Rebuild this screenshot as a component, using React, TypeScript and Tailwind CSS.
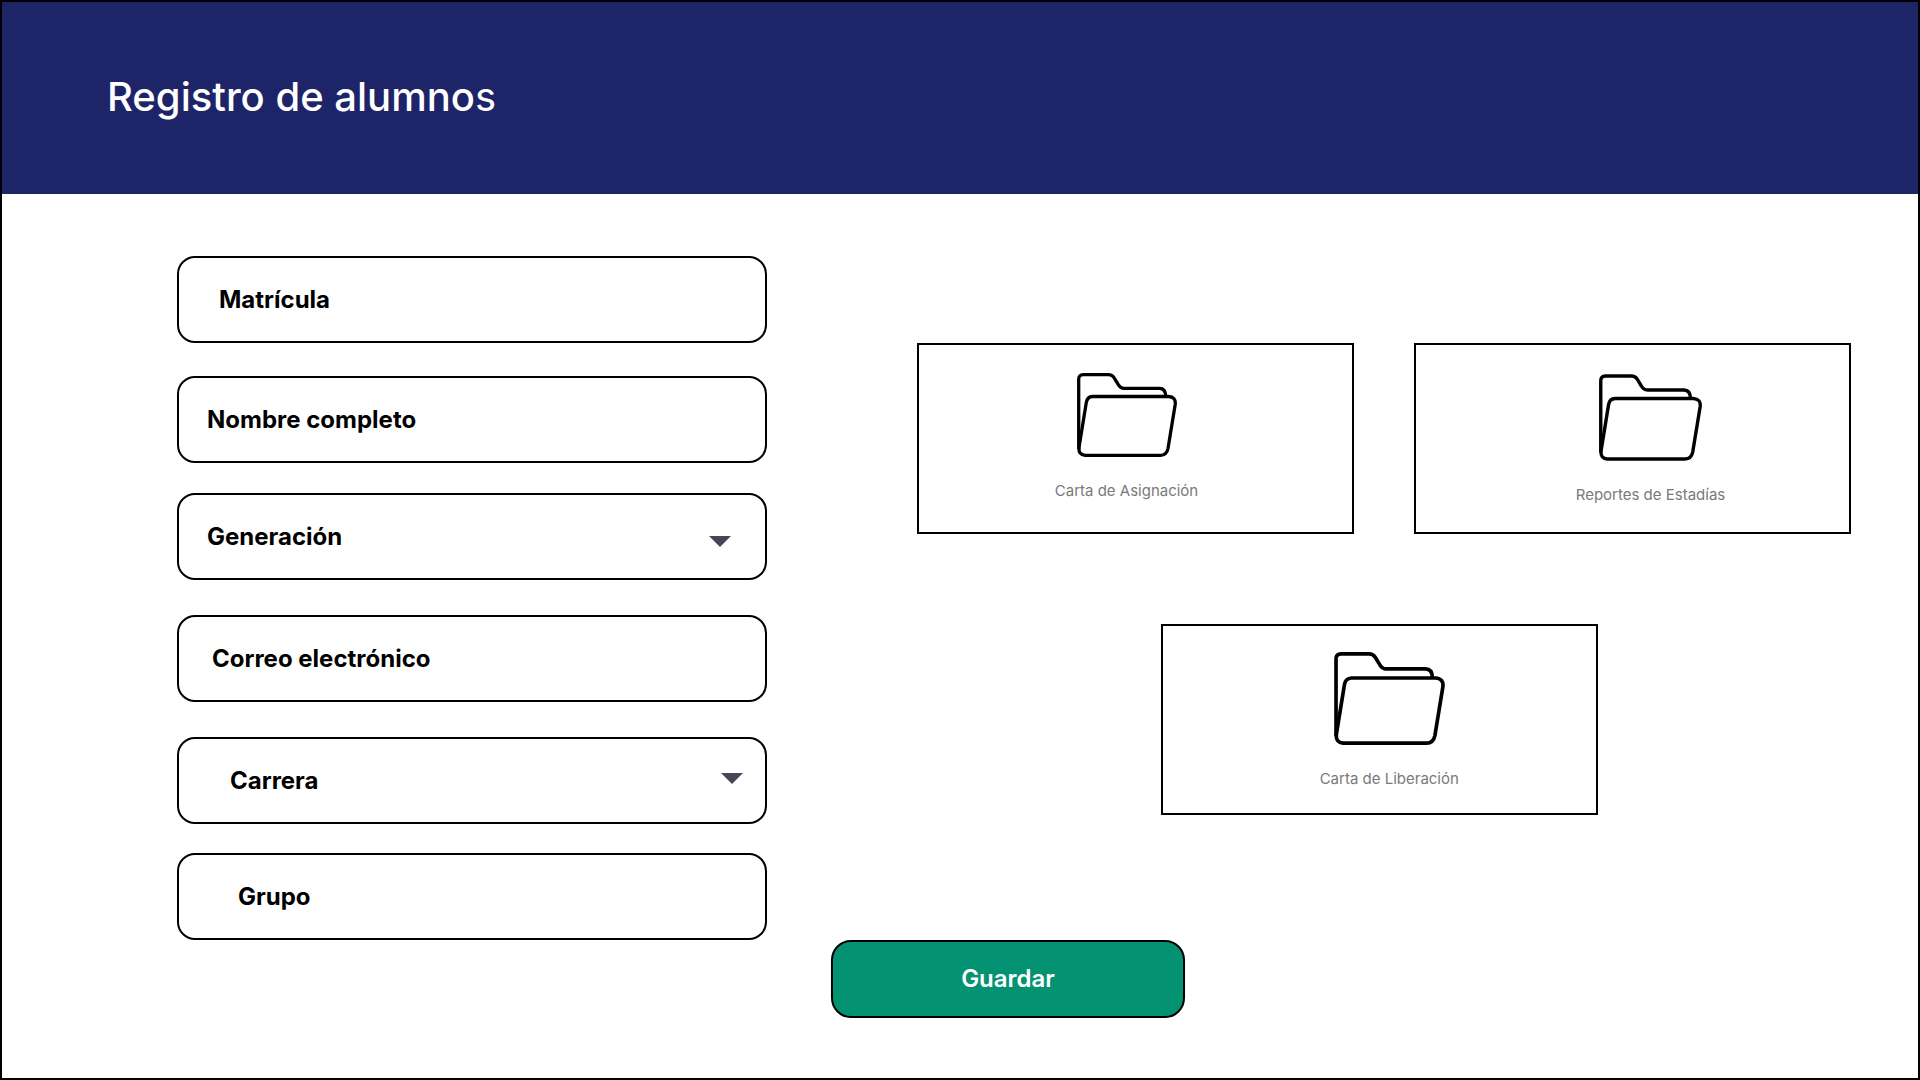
type Field = {
  name: string;
  label: string;
  kind: "text" | "select";
  spacing: string;
  indent: string;
  arrow?: string;
};

const fields: Field[] = [
  { name: "matricula", label: "Matrícula", kind: "text", spacing: "", indent: "pl-10" },
  { name: "nombre", label: "Nombre completo", kind: "text", spacing: "mt-[33px]", indent: "pl-7" },
  {
    name: "generacion",
    label: "Generación",
    kind: "select",
    spacing: "mt-[30px]",
    indent: "pl-7",
    arrow: "right-9 top-[43px]",
  },
  { name: "correo", label: "Correo electrónico", kind: "text", spacing: "mt-[35px]", indent: "pl-[33px]" },
  {
    name: "carrera",
    label: "Carrera",
    kind: "select",
    spacing: "mt-[35px]",
    indent: "pl-[51px]",
    arrow: "right-6 top-9",
  },
  { name: "grupo", label: "Grupo", kind: "text", spacing: "mt-[29px]", indent: "pl-[59px]" },
];

const controlClass =
  "block h-[87px] w-full appearance-none rounded-[18px] border-2 border-black bg-white text-2xl font-bold text-black outline-none placeholder:text-black placeholder:opacity-100";

function FormField({ field }: { field: Field }) {
  if (field.kind === "select") {
    return (
      <div className={`relative ${field.spacing}`}>
        <select aria-label={field.label} name={field.name} className={`${controlClass} ${field.indent}`}>
          <option>{field.label}</option>
        </select>
        <svg
          viewBox="0 0 22 11"
          className={`pointer-events-none absolute h-[11px] w-[22px] ${field.arrow}`}
          aria-hidden="true"
        >
          <path d="M0 0H22L11 11Z" fill="#4a4459" />
        </svg>
      </div>
    );
  }
  return (
    <div className={field.spacing}>
      <input
        type="text"
        aria-label={field.label}
        name={field.name}
        placeholder={field.label}
        className={`${controlClass} ${field.indent}`}
      />
    </div>
  );
}

function FolderIcon({ className }: { className: string }) {
  return (
    <svg viewBox="0 0 100 84" className={className} fill="none" stroke="#000" strokeWidth="3.3" aria-hidden="true">
      <path d="M1.7 76V6.2Q1.7 1.7 6.2 1.7H31.5Q35 1.7 37 4.6L41 11.2Q43.3 15.3 47 15.3H82.5Q88.7 15.3 88.7 23.5" />
      <path d="M15.6 23.5H91.5Q99.2 24 98.2 31.5L91 75.5Q89.6 82.3 83.5 82.3H8Q1.3 81.8 2 74.5L9.3 29.5Q10.2 23.8 15.6 23.5Z" />
    </svg>
  );
}

function DocumentCard({
  label,
  iconClass,
  className,
}: {
  label: string;
  iconClass: string;
  className: string;
}) {
  return (
    <button
      type="button"
      className={`flex h-[191px] flex-col items-center border-2 border-black bg-white text-[15px] leading-6 text-[#7a7a7a] ${className}`}
    >
      <FolderIcon className={iconClass} />
      <span>{label}</span>
    </button>
  );
}

export default function App() {
  return (
    <div className="min-h-screen border-2 border-black bg-white font-['Inter',sans-serif]">
      <header className="flex h-48 items-center bg-[#1e2468] pb-0.5 pl-[105px]">
        <h1 className="text-[40px] leading-[48px] font-medium text-white">
          Registro de alumno<span className="font-normal">s</span>
        </h1>
      </header>
      <form className="pt-[62px]">
        <div className="grid grid-cols-[590fr_934fr] gap-x-[150px] pr-[67px] pl-[175px]">
          <div>
            {fields.map((field) => (
              <FormField key={field.name} field={field} />
            ))}
          </div>
          <div className="grid grid-cols-2 content-start gap-x-[60px] gap-y-[90px] pt-[87px]">
            <DocumentCard
              label="Carta de Asignación"
              iconClass="mb-[22px] h-[84px] w-[100px]"
              className="pt-7 pr-[18px]"
            />
            <DocumentCard
              label="Reportes de Estadías"
              iconClass="mb-[22px] h-[87px] w-[103px]"
              className="pt-[29px] pl-9"
            />
            <DocumentCard
              label="Carta de Liberación"
              iconClass="mb-[22px] h-[93px] w-[111px]"
              className="col-span-2 ml-[26.1%] w-[calc(50%-30px)] pt-[26px] pl-5"
            />
          </div>
        </div>
        <div className="flex justify-center pl-24">
          <button
            type="button"
            className="h-[78px] w-[354px] rounded-[20px] border-2 border-black bg-[#049372] text-2xl font-semibold text-white"
          >
            Guardar
          </button>
        </div>
      </form>
    </div>
  );
}
